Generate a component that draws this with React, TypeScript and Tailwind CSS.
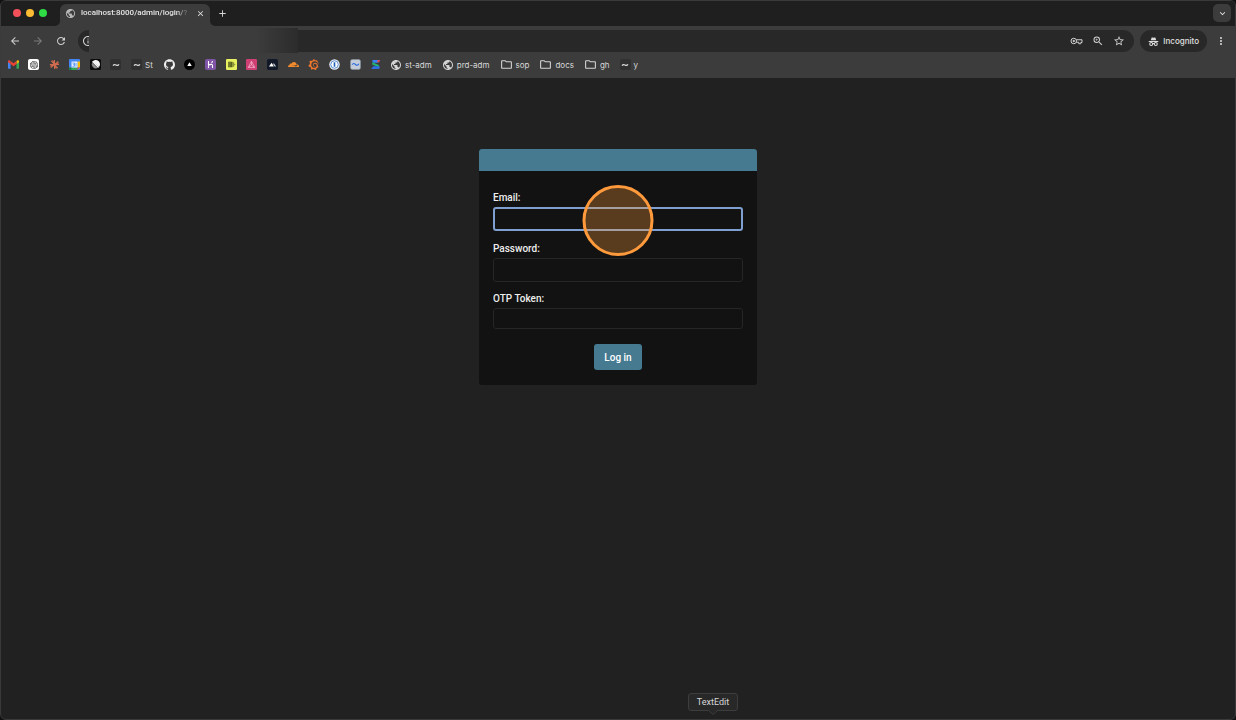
import { ReactNode } from "react";
import {
  MdAdd,
  MdArrowBack,
  MdArrowForward,
  MdClose,
  MdExpandMore,
  MdInfoOutline,
  MdMoreVert,
  MdOutlineFolder,
  MdPublic,
  MdRefresh,
  MdStarBorder,
  MdZoomIn,
} from "react-icons/md";
import { SiCloudflare, SiGithub, SiGrafana, SiOpenai } from "react-icons/si";

const Tile = ({ className, children }: { className: string; children?: ReactNode }) => (
  <span
    className={`w-[11px] h-[11px] rounded-[2px] flex items-center justify-center flex-shrink-0 overflow-hidden ${className}`}
  >
    {children}
  </span>
);

const Tilde = () => (
  <Tile className="bg-[#303030]">
    <svg viewBox="0 0 10 10" className="w-[10px] h-[10px]" fill="none" stroke="#dcdcdc">
      <path d="M2 5.600C2.900 4.300 4 4.400 5 5s2.100.700 3-.600" strokeWidth="1.200" />
    </svg>
  </Tile>
);

const Gmail = () => (
  <svg viewBox="0 0 24 18" className="w-[11px] h-[9px]">
    <path d="M0 2.500V16.500A1.500 1.500 0 0 0 1.500 18H5.500V7Z" fill="#4285f4" />
    <path d="M24 2.500V16.500A1.500 1.500 0 0 1 22.500 18H18.500V7Z" fill="#34a853" />
    <path d="M18.500 1.600V8L24 4V2.300C24 .2 21.500-.8 19.900.5Z" fill="#fbbc04" />
    <path d="M5.500 8V1.600L12 6.500 18.500 1.600V8L12 13Z" fill="#ea4335" />
    <path d="M0 2.300V4L5.500 8V1.600L4.100.5C2.500-.8 0 .2 0 2.300Z" fill="#ea4335" />
  </svg>
);

const Starburst = () => (
  <svg viewBox="0 0 24 24" className="w-[11px] h-[11px]" stroke="#cf6b4e" strokeWidth="2.200">
    <path d="M12 2V22M2 12H22M5 4L19 20M20 5L4 19M8 2.500L16 21.500M2.500 16L21.500 8" />
  </svg>
);

const Calendar = () => (
  <svg viewBox="0 0 22 22" className="w-[11px] h-[11px]">
    <rect width="22" height="22" rx="2" fill="#4285f4" />
    <path d="M17 5h5v12h-5z" fill="#fbbc04" />
    <path d="M5 17h12v5H5z" fill="#34a853" />
    <path d="M17 17h5l-5 5z" fill="#ea4335" />
    <path d="M0 17h5v5H2a2 2 0 0 1-2-2z" fill="#188038" />
    <path d="M5 5h12v12H5z" fill="#e6effd" />
    <path d="M7 8h4v3H8.500M11 11v3.500H7M14 8v7" fill="none" stroke="#4285f4" strokeWidth="1.500" />
  </svg>
);

const Linear = () => (
  <svg viewBox="0 0 22 22" className="w-[11px] h-[11px]">
    <rect width="22" height="22" rx="3" fill="#0b0b0c" />
    <path d="M5 5A8 8 0 0 1 18 16Z" fill="#f4f4f4" />
    <path d="M4 7L15.500 18A8.500 8.500 0 0 1 4 7Z" fill="#8b8b8b" />
    <path d="M5 5L17 17" stroke="#f4f4f4" strokeWidth="2.500" />
  </svg>
);

const Triangle = () => (
  <svg viewBox="0 0 22 22" className="w-[11px] h-[11px]">
    <circle cx="11" cy="11" r="11" fill="#000" />
    <path d="M11 6.500L15.500 14H6.500Z" fill="#fff" />
  </svg>
);

const Bars = () => (
  <svg viewBox="0 0 20 20" className="w-[11px] h-[11px]">
    <rect width="20" height="20" rx="2" fill="#e6f061" />
    <path d="M4 5h8v10H4Z" fill="#59611f" />
    <path d="M14 6v8" stroke="#59611f" strokeWidth="1.500" />
    <path d="M11 10h6M7 5v10" stroke="#8b943a" strokeWidth="1.500" />
  </svg>
);

const PinkTriangle = () => (
  <svg viewBox="0 0 20 20" className="w-[11px] h-[11px]">
    <rect width="20" height="20" rx="2" fill="#cf3f74" />
    <path
      d="M10 4L16 15.500H4ZM10 4v7M10 11L4 15.500M10 11l6 4.500"
      fill="none"
      stroke="#f0a5c0"
      strokeWidth="1.500"
    />
  </svg>
);

const Peaks = () => (
  <svg viewBox="0 0 20 20" className="w-[11px] h-[11px]">
    <rect width="20" height="20" rx="3" fill="#111827" />
    <path d="M3.500 13.500L8.500 7l4 6.500Z" fill="#fff" />
    <path d="M11 9l1.500-1.500L16.500 13.500h-2.500Z" fill="#d4dae6" />
  </svg>
);

const Keyhole = () => (
  <svg viewBox="0 0 22 22" className="w-[11px] h-[11px]">
    <circle cx="11" cy="11" r="10.500" fill="#e9eef5" />
    <circle cx="11" cy="11" r="7.500" fill="#fff" stroke="#5b8fd4" strokeWidth="2" />
    <path d="M11 6.500v9" stroke="#1f5fb8" strokeWidth="3.200" />
  </svg>
);

const Wave = () => (
  <svg viewBox="0 0 20 20" className="w-[11px] h-[11px]">
    <rect x="1" y="1" width="18" height="18" rx="3" fill="#c3ccd8" stroke="#8c97a6" />
    <path d="M4 10.500C5.500 7.500 7.500 7.500 10 10s4.500 1.500 6-1.500" fill="none" stroke="#2d6cdf" strokeWidth="2" />
  </svg>
);

const Ribbon = () => (
  <svg viewBox="0 0 20 20" className="w-[11px] h-[11px]">
    <path d="M5 2h13l-3 5H7a3 3 0 0 1-2-5Z" fill="#3b82f6" />
    <path d="M4 6l12 5v4L4 10Z" fill="#22b573" />
    <path d="M2 18h12a3 3 0 0 0 3-5H6Z" fill="#2f6fe4" />
    <path d="M14 2h4l-1 4h-4Z" fill="#e5484d" />
  </svg>
);

const Incognito = () => (
  <svg viewBox="0 0 24 24" className="w-[11px] h-[11px]" stroke="#dcdcdc" strokeWidth="2.400">
    <path d="M6 9.500L8 3h1.500L12 4l2.500-1H16L18 9.500Z" fill="#dcdcdc" stroke="none" />
    <path d="M1.500 12H22.500" />
    <circle cx="7" cy="17.500" r="3.200" fill="none" />
    <circle cx="17" cy="17.500" r="3.200" fill="none" />
    <path d="M10 17q2-1.300 4 0" fill="none" />
  </svg>
);

const PasswordKey = () => (
  <svg viewBox="0 0 26 16" className="w-[13px] h-[8px]" fill="none" stroke="#d0d0d0" strokeWidth="2">
    <circle cx="7.500" cy="8" r="5.500" />
    <circle cx="7.500" cy="8" r="1.500" fill="#d0d0d0" />
    <path d="M12.500 5.500H24V11H21.500V13.500H17.500V10.500H12.500" />
  </svg>
);

const leftBookmarks = [
  { name: "Mail", icon: <Gmail /> },
  {
    name: "Chat",
    icon: (
      <Tile className="bg-white">
        <SiOpenai className="w-2 h-2 text-[#222]" />
      </Tile>
    ),
  },
  { name: "Assistant", icon: <Starburst /> },
  { name: "Calendar", icon: <Calendar /> },
  { name: "Issues", icon: <Linear /> },
  { name: "Home", icon: <Tilde /> },
];

const midBookmarks = [
  { name: "GitHub", icon: <SiGithub className="w-[11px] h-[11px] text-[#f0f0f0]" /> },
  { name: "Deployments", icon: <Triangle /> },
  {
    name: "Heroku",
    icon: (
      <Tile className="bg-[#8055a8]">
        <svg viewBox="0 0 11 11" className="w-[11px] h-[11px]" fill="none" stroke="#fff">
          <path d="M3.500 2v4.200C5 5.300 7.500 4.800 7.500 6.500V9M7.500 2q0 1.200-1 2M3.500 7.300V9" strokeWidth="1.100" />
        </svg>
      </Tile>
    ),
  },
  { name: "Logs", icon: <Bars /> },
  { name: "Alerts", icon: <PinkTriangle /> },
  { name: "Metrics", icon: <Peaks /> },
  { name: "Cloudflare", icon: <SiCloudflare className="w-[11px] h-[11px] text-[#f38b2c]" /> },
  { name: "Grafana", icon: <SiGrafana className="w-[11px] h-[11px] text-[#f0762b]" /> },
  { name: "Passwords", icon: <Keyhole /> },
  { name: "Status", icon: <Wave /> },
  { name: "Docs", icon: <Ribbon /> },
];

const globe = <MdPublic className="w-3 h-3 text-[#d4d4d4]" />;
const folder = <MdOutlineFolder className="w-[13px] h-[13px] text-[#d4d4d4]" />;

const namedBookmarks = [
  { label: "st-adm", icon: globe },
  { label: "prd-adm", icon: globe },
  { label: "sop", icon: folder },
  { label: "docs", icon: folder },
  { label: "gh", icon: folder },
  { label: "y", icon: <Tilde /> },
];

const IconLink = ({ name, children }: { name: string; children: ReactNode }) => (
  <a href="#" aria-label={name} className="w-3 h-3 flex items-center justify-center flex-shrink-0">
    {children}
  </a>
);

const TabStrip = () => (
  <div className="flex h-[25px] bg-[#1f1f1f] pl-3 pr-1">
    <div className="flex items-center gap-[5px] h-6 w-[47px] flex-shrink-0">
      <span className="w-2 h-2 rounded-full bg-[#f4505a]" />
      <span className="w-2 h-2 rounded-full bg-[#fdbc33]" />
      <span className="w-2 h-2 rounded-full bg-[#2fdc45]" />
    </div>
    <div className="relative flex items-center h-[22px] mt-[3px] w-[150px] rounded-t-[6px] bg-[#3c3c3c] px-[5px] pb-1 flex-shrink-0">
      <svg viewBox="0 0 5 5" className="absolute -left-[5px] bottom-0 w-[5px] h-[5px]">
        <path d="M5 0A5 5 0 0 1 0 5H5Z" fill="#3c3c3c" />
      </svg>
      <svg viewBox="0 0 5 5" className="absolute -right-[5px] bottom-0 w-[5px] h-[5px]">
        <path d="M0 0A5 5 0 0 0 5 5H0Z" fill="#3c3c3c" />
      </svg>
      <MdPublic className="w-[11px] h-[11px] text-[#b8b8b8] flex-shrink-0" />
      <span className="ml-[5px] whitespace-nowrap font-['Roboto',sans-serif] text-[8px] leading-3 font-medium text-[#e4e4e4] [mask-image:linear-gradient(to_right,black_90%,#0003)]">
        localhost:8000/admin/login/?
      </span>
      <button type="button" aria-label="Close tab" className="ml-auto">
        <MdClose className="w-[9px] h-[9px] text-[#e4e4e4]" />
      </button>
    </div>
    <button type="button" aria-label="New tab" className="h-6 ml-[7px]">
      <MdAdd className="w-[11px] h-[11px] text-[#d8d8d8]" />
    </button>
    <button
      type="button"
      aria-label="Search tabs"
      className="ml-auto mt-[3px] w-[18px] h-[18px] rounded-[5px] bg-[#3c3c3c] flex items-center justify-center"
    >
      <MdExpandMore className="w-[11px] h-[11px] text-[#e8e8e8]" />
    </button>
  </div>
);

const Toolbar = () => (
  <div className="flex items-center h-[30px] px-2 text-[#d0d0d0]">
    <button type="button" aria-label="Back">
      <MdArrowBack className="w-3 h-3" />
    </button>
    <button type="button" aria-label="Forward" className="ml-[11px]" disabled>
      <MdArrowForward className="w-3 h-3 text-[#7b7b7b]" />
    </button>
    <button type="button" aria-label="Reload" className="ml-[11px]">
      <MdRefresh className="w-3 h-3" />
    </button>
    <div className="relative flex items-center flex-1 h-[22px] ml-[11px] mr-[6px] pl-1 pr-[9px] gap-[9px] rounded-full bg-[#282828]">
      <MdInfoOutline className="w-3 h-3" />
      <input aria-label="Address" className="flex-1 min-w-0 bg-transparent text-[8px] outline-none" />
      <PasswordKey />
      <MdZoomIn className="w-3 h-3" />
      <MdStarBorder className="w-3 h-3" />
      <div className="absolute left-[11px] -top-[2px] w-[209px] h-[25px] bg-linear-to-r from-[#3c3c3c] from-80% to-[#2c2c2c]" />
    </div>
    <button
      type="button"
      className="flex items-center gap-1 h-[22px] px-2 rounded-full bg-[#282828] text-[8px] font-medium text-[#e0e0e0]"
    >
      <Incognito />
      Incognito
    </button>
    <button type="button" aria-label="Menu" className="ml-[8px]">
      <MdMoreVert className="w-3 h-3" />
    </button>
  </div>
);

const BookmarksBar = () => (
  <nav className="flex items-center h-[22px] pl-[6px] pb-[5px] text-[8px] leading-3 text-[#d8d8d8]">
    <div className="flex justify-between w-[115px]">
      {leftBookmarks.map((bookmark) => (
        <IconLink key={bookmark.name} name={bookmark.name}>
          {bookmark.icon}
        </IconLink>
      ))}
    </div>
    <a href="#" className="flex items-center gap-[3px] w-8 ml-[9px]">
      <Tilde />
      St
    </a>
    <div className="flex justify-between w-[219px]">
      {midBookmarks.map((bookmark) => (
        <IconLink key={bookmark.name} name={bookmark.name}>
          {bookmark.icon}
        </IconLink>
      ))}
    </div>
    <div className="flex gap-[10px] ml-2">
      {namedBookmarks.map((bookmark) => (
        <a href="#" key={bookmark.label} className="flex items-center gap-[3px]">
          {bookmark.icon}
          {bookmark.label}
        </a>
      ))}
    </div>
  </nav>
);

const LoginForm = () => (
  <main className="w-[278px] mx-auto mt-[71px] rounded-[3px] overflow-hidden bg-[#121212] font-['Roboto',sans-serif] text-[10px] text-[#eeeeee]">
    <div className="h-[22px] bg-[#467a91]" />
    <form className="flex flex-col px-[14px] pt-[18px] pb-[15px]">
      <label htmlFor="email" className="leading-[18px] font-medium">
        Email:
      </label>
      <div className="relative">
        <input
          id="email"
          type="email"
          className="block w-full h-6 px-2 rounded-[3px] border-2 border-[#7f9fd0] bg-[#121212] outline-none"
        />
        <span className="absolute left-1/2 -top-[22px] -translate-x-1/2 w-[71px] h-[71px] rounded-full border-[3px] border-[#ff9a3c] bg-[#ff9a3c]/30 pointer-events-none" />
      </div>
      <label htmlFor="password" className="mt-[9px] leading-[18px] font-medium">
        Password:
      </label>
      <input
        id="password"
        type="password"
        className="h-6 px-2 rounded-[3px] border border-[#262626] bg-[#121212] outline-none"
      />
      <label htmlFor="otp" className="mt-2 leading-[18px] font-medium">
        OTP Token:
      </label>
      <input
        id="otp"
        type="text"
        className="h-[21px] px-2 rounded-[3px] border border-[#262626] bg-[#121212] outline-none"
      />
      <button
        type="button"
        className="self-center mt-[15px] h-[26px] w-12 rounded-[3px] bg-[#467a91] font-medium text-white"
      >
        Log in
      </button>
    </form>
  </main>
);

export default function App() {
  return (
    <div className="bg-[#111]">
      <div className="relative min-h-screen flex flex-col rounded-[6px] overflow-hidden border border-[#3a3a3a] bg-[#212121] font-['Inter','Liberation_Sans',sans-serif]">
        <TabStrip />
        <header className="bg-[#3c3c3c]">
          <Toolbar />
          <BookmarksBar />
        </header>
        <LoginForm />
        <div
          role="tooltip"
          className="absolute left-[687px] bottom-2 h-[18px] w-[50px] rounded-[3px] border border-[#3d3d3d] bg-[#282828] text-center font-['Roboto',sans-serif] text-[9px] leading-4 text-[#d8d8d8]"
        >
          TextEdit
          <svg viewBox="0 0 10 5" className="absolute left-[19px] top-4 w-[10px] h-[5px]">
            <path d="M0 0L5 4.500L10 0" fill="#282828" stroke="#3d3d3d" />
          </svg>
        </div>
      </div>
    </div>
  );
}
